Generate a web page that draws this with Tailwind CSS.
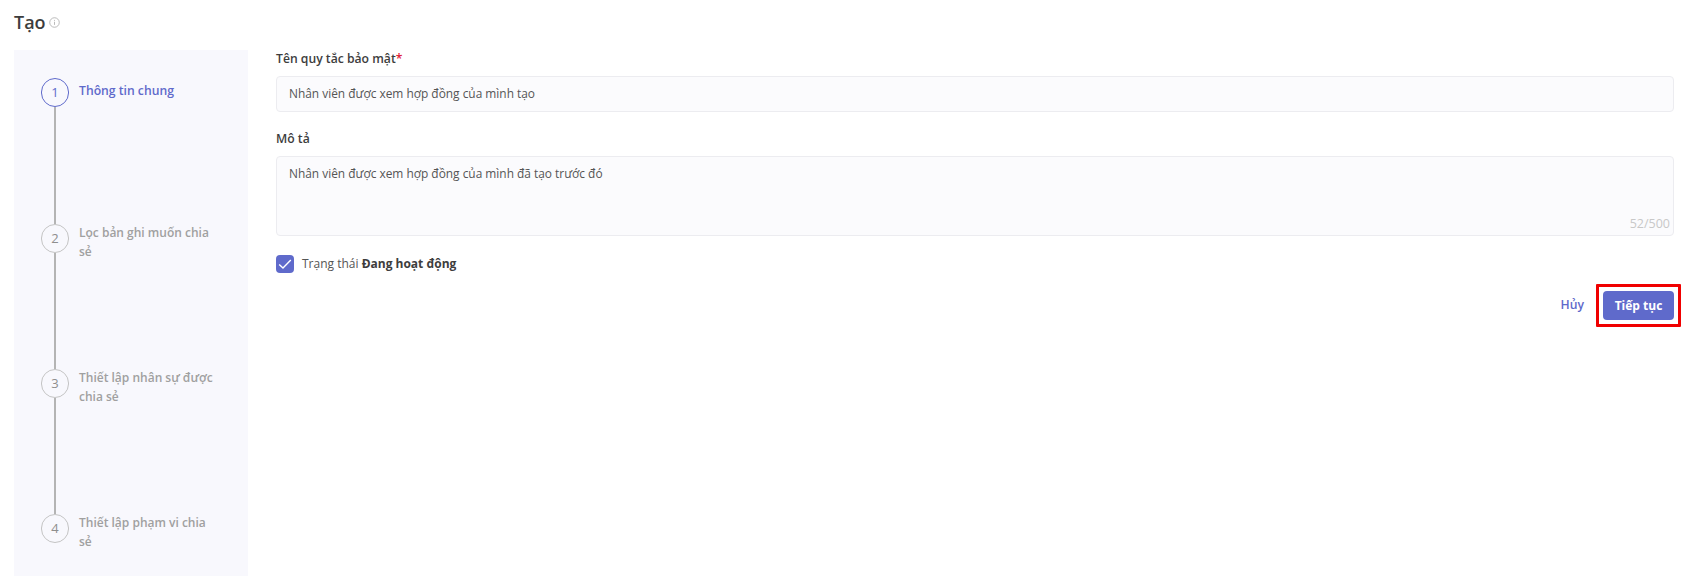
<!DOCTYPE html>
<html lang="en">
<head>
    <meta charset="UTF-8" />
    <title>Tạo</title>
    <script src="https://cdn.jsdelivr.net/npm/@tailwindcss/browser@4"></script>
</head>
<body class="h-[576px] overflow-hidden bg-white font-['Open_Sans',sans-serif] text-[#3b3b3b]">
    <div class="flex h-full flex-col pl-[14px] pr-4">
        <!-- title -->
        <div class="flex h-[50px] items-start pt-[10px]">
            <h1 class="text-[18px] leading-[24px] font-semibold text-[#3d3d3d]">Tạo</h1>
            <svg class="ml-[3px] mt-[7px] h-[11px] w-[11px] text-[#b5b5b5]" viewBox="0 0 12 12" fill="none" stroke="currentColor">
                <circle cx="6" cy="6" r="5.2" />
                <path d="M6 5.2v3.4M6 3.2v1" />
            </svg>
        </div>

        <div class="flex min-h-0 flex-1 gap-7">
            <!-- steps -->
            <aside class="flex w-[234px] shrink-0 flex-col bg-[#f8f8fd] pl-[27px] pt-[28px]">
                <div class="flex h-[146px] gap-[10px]">
                    <div class="flex w-[28px] flex-col items-center">
                        <span class="flex h-[29px] w-[28px] shrink-0 items-center justify-center rounded-full border border-[#5f6acb] text-[13px] text-[#5f6acb]">1</span>
                        <span class="w-[2px] flex-1 bg-[#b4b4b4]"></span>
                    </div>
                    <p class="w-[140px] pt-[4px] text-[12.2px] leading-[18px] font-semibold text-[#5f6acb]">Thông tin chung</p>
                </div>
                <div class="flex h-[145px] gap-[10px]">
                    <div class="flex w-[28px] flex-col items-center">
                        <span class="flex h-[29px] w-[28px] shrink-0 items-center justify-center rounded-full border border-[#c4c4c4] text-[13px] text-[#8e8e8e]">2</span>
                        <span class="w-[2px] flex-1 bg-[#b4b4b4]"></span>
                    </div>
                    <p class="w-[140px] text-[12px] leading-[18.5px] font-semibold text-[#a0a0a0]">Lọc bản ghi muốn chia sẻ</p>
                </div>
                <div class="flex h-[145px] gap-[10px]">
                    <div class="flex w-[28px] flex-col items-center">
                        <span class="flex h-[29px] w-[28px] shrink-0 items-center justify-center rounded-full border border-[#c4c4c4] text-[13px] text-[#8e8e8e]">3</span>
                        <span class="w-[2px] flex-1 bg-[#b4b4b4]"></span>
                    </div>
                    <p class="w-[140px] text-[12px] leading-[18.5px] font-semibold text-[#a0a0a0]">Thiết lập nhân sự được chia sẻ</p>
                </div>
                <div class="flex gap-[10px]">
                    <span class="flex h-[29px] w-[28px] shrink-0 items-center justify-center rounded-full border border-[#c4c4c4] text-[13px] text-[#8e8e8e]">4</span>
                    <p class="w-[140px] text-[12px] leading-[18.5px] font-semibold text-[#a0a0a0]">Thiết lập phạm vi chia sẻ</p>
                </div>
            </aside>

            <!-- form -->
            <main class="flex-1">
                <label class="block h-[26px] text-[12.2px] leading-[18px] font-semibold text-[#3d3d3d]">Tên quy tắc bảo mật<span class="text-[#e0243a]">*</span></label>
                <div class="flex h-[36px] items-center rounded-[4px] border border-[#ececf0] bg-[#fbfbfd] px-3 text-[11.9px] text-[#555]">Nhân viên được xem hợp đồng của mình tạo</div>
                <label class="mt-[18px] block h-[26px] text-[12.2px] leading-[18px] font-semibold text-[#3d3d3d]">Mô tả</label>
                <div class="relative h-[80px] rounded-[4px] border border-[#ececf0] bg-[#fbfbfd] px-3 pt-[7px] text-[11.9px] leading-[18px] text-[#555]">
                    Nhân viên được xem hợp đồng của mình đã tạo trước đó
                    <span class="absolute right-[3px] bottom-[3px] text-[12.5px] leading-[16px] text-[#c8c8c8]">52/500</span>
                </div>
                <div class="mt-[19px] flex items-center gap-2">
                    <span class="flex h-[18px] w-[18px] items-center justify-center rounded-[4px] bg-[#5f6acb]">
                        <svg class="h-[14px] w-[14px]" viewBox="0 0 14 14" fill="none" stroke="#fff" stroke-width="1.4"><path d="M1.2 7.4 5 11 12.8 3" /></svg>
                    </span>
                    <span class="text-[12px] text-[#555]">Trạng thái <b class="font-bold text-[#3d3d3d]">Đang hoạt động</b></span>
                </div>
                <div class="mt-[18px] flex items-center justify-end gap-[19px]">
                    <a class="text-[12.2px] font-semibold text-[#5f6acb]">Hủy</a>
                    <div class="relative">
                        <button class="block h-[29px] w-[71px] rounded-[4px] bg-[#5f6acb] text-[12px] font-bold text-white">Tiếp tục</button>
                        <!-- red annotation box -->
                        <span class="absolute -inset-[7px] rounded-[1px] border-[3px] border-[#f00000]"></span>
                    </div>
                </div>
            </main>
        </div>
    </div>
</body>
</html>
